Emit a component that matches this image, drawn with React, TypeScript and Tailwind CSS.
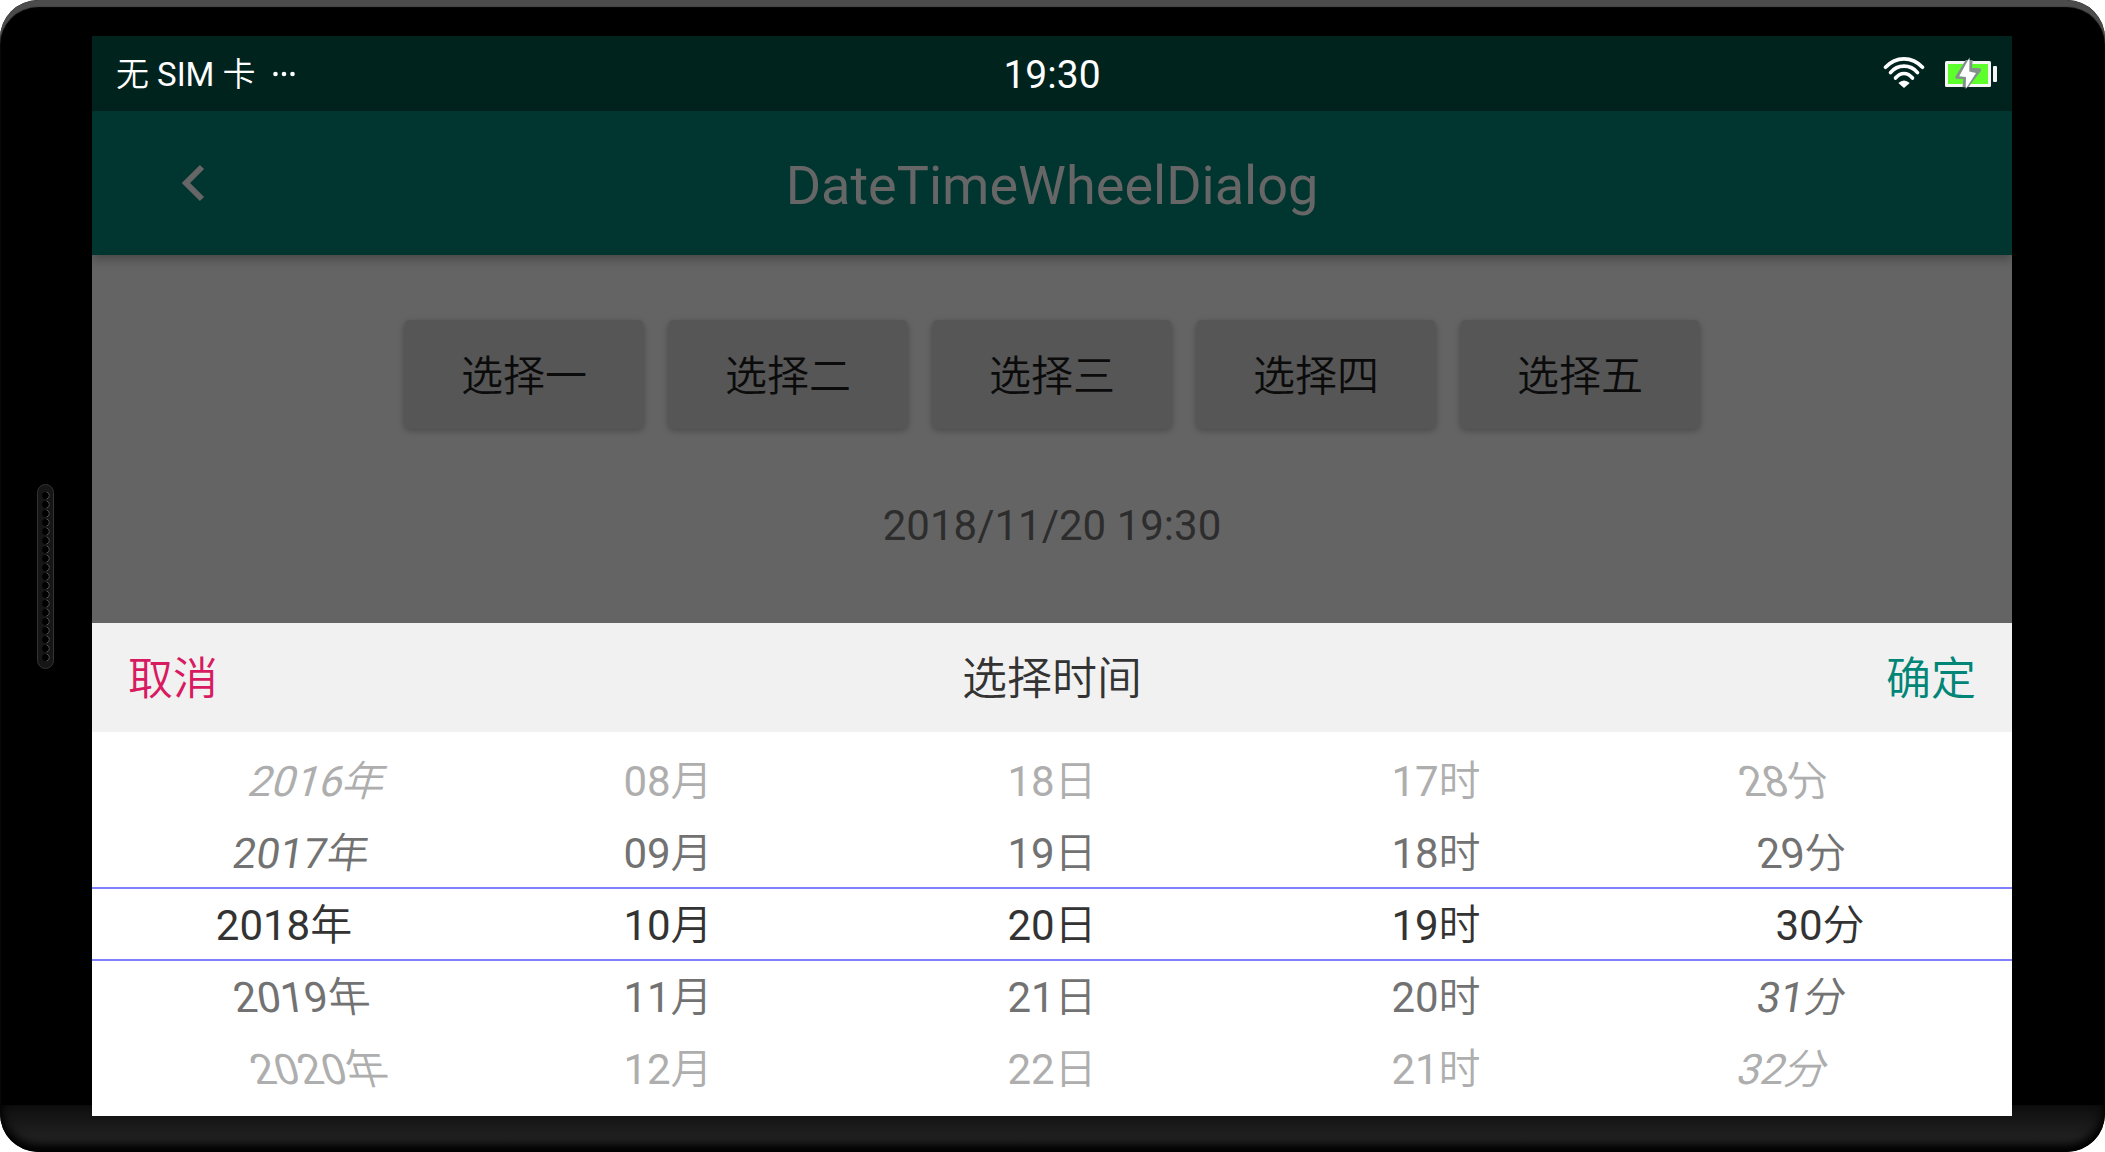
const CHOICES = ['选择一', '选择二', '选择三', '选择四', '选择五'];

type Column = { label: string; values: string[]; lean: 'left' | 'none' | 'right' };

const COLUMNS: Column[] = [
  { label: '年', values: ['2016', '2017', '2018', '2019', '2020'], lean: 'left' },
  { label: '月', values: ['08', '09', '10', '11', '12'], lean: 'none' },
  { label: '日', values: ['18', '19', '20', '21', '22'], lean: 'none' },
  { label: '时', values: ['17', '18', '19', '20', '21'], lean: 'none' },
  { label: '分', values: ['28', '29', '30', '31', '32'], lean: 'right' },
];

const TONES = ['text-[#aeaeae]', 'text-[#727272]', 'text-[#333333]', 'text-[#727272]', 'text-[#aeaeae]'];

// The outer wheels are seen at an angle: rows lean around the wheel's axis.
const LEANS = {
  left: ['pl-[70px] -skew-x-[16deg]', 'pl-[35px] -skew-x-[8deg]', '', 'pl-[35px] skew-x-[8deg]', 'pl-[70px] skew-x-[16deg]'],
  none: ['', '', '', '', ''],
  right: ['pr-[72px] skew-x-[16deg]', 'pr-[36px] skew-x-[8deg]', '', 'pr-[36px] -skew-x-[8deg]', 'pr-[72px] -skew-x-[16deg]'],
};

function WifiIcon() {
  return (
    <svg width="42" height="32" viewBox="0 0 42 32" fill="none" stroke="#fff" strokeWidth="3.6" strokeLinecap="round" aria-label="Wi-Fi">
      <path d="M2.500 10.300C13 -1 29 -1 39.500 10.300" />
      <path d="M7.500 15.600C14.500 7 27.500 7 34.500 15.600" />
      <path d="M12.500 21C17.500 15 24.500 15 29.500 21" />
      <path d="M21 31L15.300 26Q21 21 26.700 26Z" fill="#fff" stroke="none" />
    </svg>
  );
}

function BatteryIcon() {
  return (
    <svg width="52" height="34" viewBox="0 0 52 34" aria-label="充电中">
      <rect x="0" y="5" width="46" height="26" rx="1.500" fill="#f5f5f5" />
      <rect x="3" y="8" width="40" height="20" fill="#5cff2b" />
      <rect x="48" y="10" width="4" height="16" rx="1" fill="#f5f5f5" />
      <path d="M20.700 4L10.300 20.700L10.800 22.700L18.300 23L17.500 31.300H23.300L36.200 14.500L35.300 12.300L27 12L27.700 4Z" fill="#84908c" />
      <path d="M24.500 1.500L14.200 20.300L21 21L20.700 33L31 17L24.300 15.500Z" fill="#fff" />
    </svg>
  );
}

function Speaker() {
  return (
    <div className="flex w-[17px] flex-col items-center rounded-full border border-[#333] bg-[#161616] py-1.5 pl-px">
      {Array.from({ length: 19 }, (_, i) => (
        <svg key={i} width="10" height="9" viewBox="0 0 10 9" aria-hidden="true">
          <circle cx="5" cy="4.500" r="3.800" fill="#000" />
          <path d="M5.500 0.900A3.700 3.700 0 0 1 5.500 8.100" fill="none" stroke="#555" strokeWidth="1" />
        </svg>
      ))}
    </div>
  );
}

export default function App() {
  return (
    <div className="bg-white font-[Roboto,'Noto_Sans_CJK_SC',sans-serif]">
      <div className="relative flex min-h-screen overflow-hidden rounded-[38px] bg-black">
        <div className="absolute inset-0 rounded-[38px] shadow-[inset_0_7px_1px_#4c4c4c]" />
        <div className="absolute inset-x-0 bottom-0 h-[47px] rounded-b-[38px] bg-linear-to-b from-[#0e0e0e] to-[#2a2a2a] shadow-[inset_0_-6px_8px_2px_#000]" />

        <aside className="relative flex w-[92px] items-center justify-center pr-0.5">
          <Speaker />
        </aside>

        <main className="relative my-9 mr-[93px] flex flex-1 flex-col bg-[#646464]">
          <div className="grid h-[75px] grid-cols-3 items-center bg-[#00231e] text-white">
            <div className="flex items-center gap-[18px] pl-6 text-[33px]">
              <span className="pt-0.5 font-[350]">
                无 <span className="font-normal">SIM</span> 卡
              </span>
              <svg width="22" height="6" viewBox="0 0 22 6" fill="#fff" aria-hidden="true">
                <circle cx="2.500" cy="3" r="2.300" />
                <circle cx="11" cy="3" r="2.300" />
                <circle cx="19.500" cy="3" r="2.300" />
              </svg>
            </div>
            <time className="pt-1 text-center text-[39px]">19:30</time>
            <div className="flex items-center justify-end gap-5 pr-[15px] pb-0.5">
              <WifiIcon />
              <BatteryIcon />
            </div>
          </div>

          <header className="relative grid h-36 grid-cols-[1fr_auto_1fr] items-center bg-[#003530] text-[#666] shadow-[0_4px_10px_rgba(0,0,0,0.3)]">
            <button type="button" aria-label="返回" className="ml-[84px] justify-self-start">
              <svg width="36" height="40" viewBox="0 0 36 40" fill="none" stroke="#666" strokeWidth="6">
                <path d="M26 4L10 20L26 36" />
              </svg>
            </button>
            <h1 className="pt-1 text-[54px]">DateTimeWheelDialog</h1>
          </header>

          <section className="flex flex-1 flex-col items-center pt-[65px]">
            <div className="flex gap-6">
              {CHOICES.map((c) => (
                <button
                  key={c}
                  type="button"
                  className="h-[109px] w-60 rounded-md bg-[#565656] pt-1 text-[42px] font-[350] text-[#0b0b0b] shadow-[0_2px_6px_rgba(0,0,0,0.25)]"
                >
                  {c}
                </button>
              ))}
            </div>
            <p className="mt-[65px] text-[42px] text-[#2d2d2d]">2018/11/20 19:30</p>
          </section>

          <section role="dialog" aria-labelledby="wheel-title">
            <div className="grid h-[109px] grid-cols-3 items-center bg-[#f1f1f1] px-9 pt-1 text-[45px] font-[350]">
              <button type="button" className="justify-self-start text-[#d81b60]">取消</button>
              <h2 id="wheel-title" className="text-center text-[#333]">选择时间</h2>
              <button type="button" className="justify-self-end text-[#008577]">确定</button>
            </div>
            <div className="relative grid grid-cols-5 bg-white py-3 text-[42px]">
              {COLUMNS.map((col) => (
                <ul key={col.label} role="listbox" aria-label={col.label}>
                  {col.values.map((v, i) => (
                    <li
                      key={v}
                      role="option"
                      aria-selected={i === 2}
                      className={`flex h-[72px] items-center justify-center pt-0.5 ${TONES[i]} ${LEANS[col.lean][i]}`}
                    >
                      <span>{v}</span>
                      <span className="font-[350]">{col.label}</span>
                    </li>
                  ))}
                </ul>
              ))}
              <div className="pointer-events-none absolute inset-x-0 top-1/2 h-[74px] -translate-y-1/2 border-y-2 border-[#8080ff]" />
            </div>
          </section>
        </main>
      </div>
    </div>
  );
}
